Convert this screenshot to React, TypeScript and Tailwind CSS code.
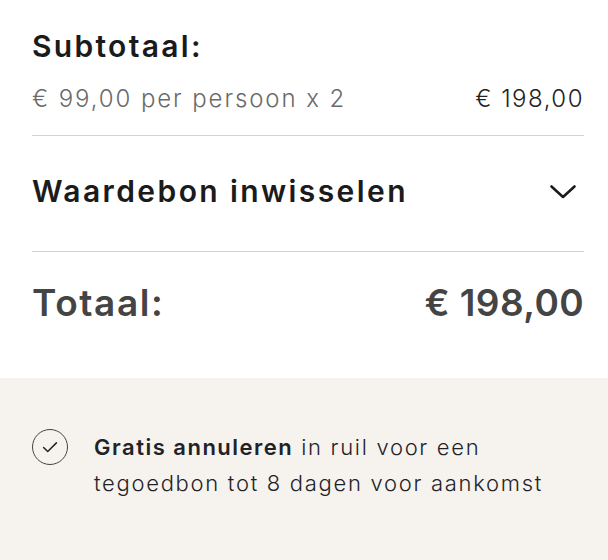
export default function App() {
  return (
    <div className="w-[608px] h-[560px] bg-white font-['Inter','Noto_Sans',sans-serif] overflow-hidden">
      <div className="pl-8 pr-6 pt-[26px]">
        {/* Subtotaal */}
        <div className="text-[30px] font-semibold leading-[40px] tracking-[2.3px] text-[#1b1b1b]">Subtotaal:</div>
        <div className="mt-[17px] flex items-center justify-between text-[24px] font-light leading-[32px]">
          <span className="tracking-[1.9px] text-[#6a6a6a]">€ 99,00 per persoon x 2</span>
          <span className="tracking-[1.5px] text-[#222222]">€ 198,00</span>
        </div>
        <div className="mt-[20px] h-px bg-[#d2d2d2]" />

        {/* Waardebon */}
        <button className="flex w-full items-center justify-between pt-[35px] pb-[40px] text-left">
          <span className="text-[30px] font-semibold leading-[40px] tracking-[2.4px] text-[#1b1b1b]">Waardebon inwisselen</span>
          <svg viewBox="0 0 28 16" className="mr-[7px] mt-[2px] h-[16px] w-[28px]" fill="none" stroke="#1b1b1b" strokeWidth={2.6} strokeLinecap="round" strokeLinejoin="round">
            <path d="M2.5 2.5L14 13L25.5 2.5" />
          </svg>
        </button>
        <div className="h-px bg-[#d2d2d2]" />

        {/* Totaal */}
        <div className="flex items-center justify-between pt-[29px] pb-[53px] text-[37px] font-semibold leading-[44px] text-[#444444]">
          <span className="tracking-[1.6px]">Totaal:</span>
          <span className="tracking-[0.4px]">€ 198,00</span>
        </div>
      </div>

      {/* Annuleren */}
      <div className="flex h-[182px] items-start gap-[26px] bg-[#f6f3ee] px-8 pt-[51px]">
        <div className="flex h-[36px] w-[36px] shrink-0 items-center justify-center rounded-full border border-[#444444]">
          <svg viewBox="0 0 24 24" className="h-[22px] w-[22px]" fill="none" stroke="#1f2329" strokeWidth={1.6} strokeLinecap="round" strokeLinejoin="round">
            <path d="M5 12.5l4.5 4.5L19 7.5" />
          </svg>
        </div>
        <p className="w-[484px] text-[22px] font-light leading-[36px] tracking-[1.7px] text-[#1f2329]">
          <b className="font-semibold tracking-[1.5px]">Gratis annuleren</b> in ruil voor een tegoedbon tot 8 dagen voor aankomst
        </p>
      </div>
    </div>
  );
}
